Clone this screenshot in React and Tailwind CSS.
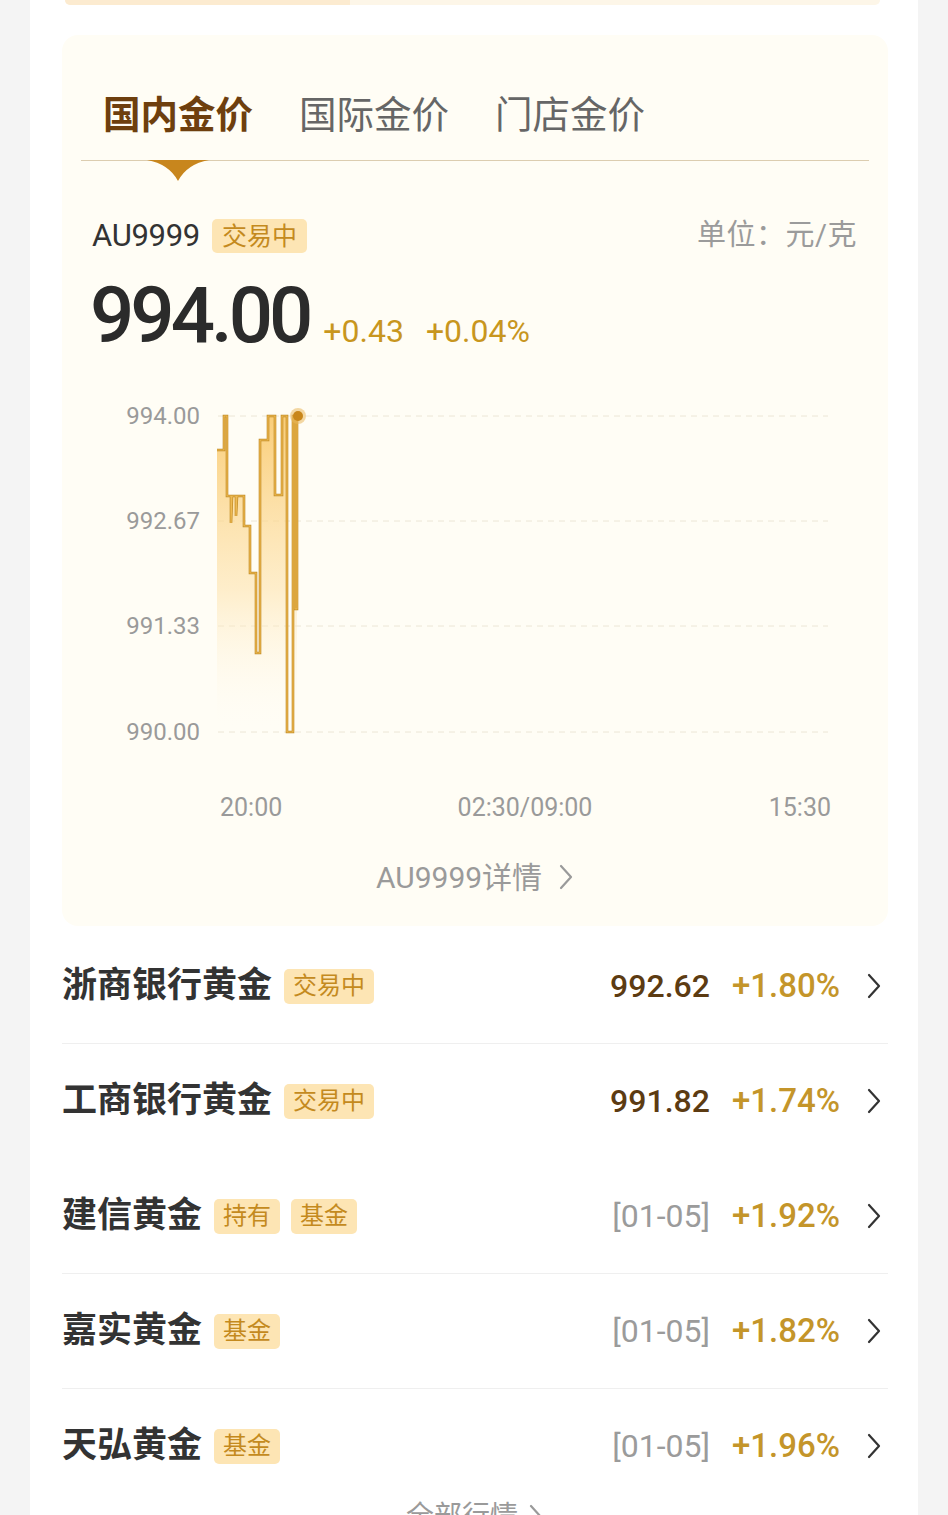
import clsx from 'clsx';

const rows = [
  { name: "浙商银行黄金", tags: ["交易中"], price: "992.62", pct: "+1.80%", line: true },
  { name: "工商银行黄金", tags: ["交易中"], price: "991.82", pct: "+1.74%", line: false },
  { name: "建信黄金", tags: ["持有", "基金"], date: "[01-05]", pct: "+1.92%", line: true },
  { name: "嘉实黄金", tags: ["基金"], date: "[01-05]", pct: "+1.82%", line: true },
  { name: "天弘黄金", tags: ["基金"], date: "[01-05]", pct: "+1.96%", line: false },
];

function Tag({ children, big }) {
  return (
    <span
      className={clsx(
        "inline-flex items-center justify-center rounded-[5px] bg-[#fde5b4] text-[#c48a1e] leading-none",
        big ? "h-[34px] px-[10px] text-[25px]" : "h-[35px] px-[9px] text-[24px]"
      )}
    >
      {children}
    </span>
  );
}

function Chevron({ className }) {
  return (
    <svg width="16" height="26" viewBox="0 0 16 26" className={className} fill="none">
      <path d="M3 2 L13 13 L3 24" stroke="currentColor" strokeWidth="2.2" strokeLinecap="round" strokeLinejoin="round" />
    </svg>
  );
}

// chart coordinates are page px minus the svg origin (62, 390)
const pts = [
  [217, 449], [224, 449], [224, 415], [227, 415], [227, 495], [231, 495], [231, 522], [232, 495],
  [236, 495], [236, 515], [237, 495], [244, 495], [244, 525], [250, 525], [250, 572], [256, 572],
  [256, 652], [260, 652], [260, 439], [268, 439], [268, 415], [275, 415], [275, 494], [282, 494],
  [282, 415], [287, 415], [287, 731], [293, 731], [293, 415], [295, 415], [295, 608], [297, 608], [297, 415],
].map(([x, y]) => [x - 62, y - 390]);

const linePath = pts.map(([x, y], i) => `${i ? "L" : "M"}${x} ${y}`).join(" ");
const areaPath = `${linePath} L${297 - 62} ${731 - 390} L${217 - 62} ${731 - 390} Z`;

function Chart() {
  const grid = [
    { y: 25, label: "994.00" },
    { y: 130, label: "992.67" },
    { y: 235, label: "991.33" },
    { y: 341, label: "990.00" },
  ];
  return (
    <svg width="826" height="440" viewBox="0 0 826 440" className="block">
      <defs>
        <linearGradient id="fillg" x1="0" y1="0" x2="0" y2="1">
          <stop offset="0%" stopColor="#f9c562" stopOpacity="0.85" />
          <stop offset="55%" stopColor="#fde1a8" stopOpacity="0.55" />
          <stop offset="100%" stopColor="#fffdf5" stopOpacity="0" />
        </linearGradient>
      </defs>
      {grid.map((g) => (
        <g key={g.label}>
          <line x1="156" x2="766" y1={g.y} y2={g.y} stroke="#ece6d6" strokeWidth="1" strokeDasharray="6 5" />
          <text x="138" y={g.y + 8} textAnchor="end" fontSize="24" fill="#9a9a9a" fontFamily="Roboto, sans-serif">
            {g.label}
          </text>
        </g>
      ))}
      <path d={areaPath} fill="url(#fillg)" />
      <path d={linePath} fill="none" stroke="#c08a24" strokeWidth="2.6" strokeLinejoin="miter" />
      <path d={linePath} fill="none" stroke="#eeba52" strokeWidth="1.2" strokeLinejoin="miter" />
      <circle cx={298 - 62} cy={415 - 390} r="8" fill="#e9b85c" opacity="0.55" />
      <circle cx={298 - 62} cy={415 - 390} r="5" fill="#c8861a" />
      <text x="158" y="425" fontSize="25" fill="#9a9a9a" fontFamily="Roboto, sans-serif">20:00</text>
      <text x="463" y="425" textAnchor="middle" fontSize="25" fill="#9a9a9a" fontFamily="Roboto, sans-serif">02:30/09:00</text>
      <text x="769" y="425" textAnchor="end" fontSize="25" fill="#9a9a9a" fontFamily="Roboto, sans-serif">15:30</text>
    </svg>
  );
}

export default function App() {
  return (
    <div className="min-h-[1515px] bg-[#f4f4f4] flex justify-center font-['Roboto','Noto_Sans_CJK_SC',sans-serif]">
      <div className="w-[888px] h-[1515px] bg-white overflow-hidden">
        {/* bottom edge of the card above */}
        <div className="ml-[35px] mr-[38px] h-[5px] rounded-b-[8px] bg-[#fdf6e8] flex">
          <div className="w-[285px] h-full rounded-bl-[8px] bg-[#fcebd0]" />
        </div>

        {/* quote panel */}
        <div className="mt-[30px] ml-[32px] mr-[30px] rounded-[16px] bg-[#fffdf5] pt-[55px] pb-[29px]">
          <div className="mx-[19px] border-b border-[#dccdb0] pb-[20px] pl-[22px] flex gap-[46px] text-[37.5px] leading-[50px]">
            <div className="relative font-bold text-[#6e3f0e]">
              国内金价
              <svg width="62" height="21" viewBox="0 0 62 21" className="absolute left-1/2 -translate-x-1/2 top-[70px]">
                <path d="M0 0 H62 Q40 4 31 21 Q22 4 0 0 Z" fill="#c8861d" />
              </svg>
            </div>
            <div className="text-[#666]">国际金价</div>
            <div className="text-[#666]">门店金价</div>
          </div>

          <div className="mt-[55px] h-[40px] pl-[30px] pr-[31px] flex items-center">
            <span className="text-[31px] text-[#333] tracking-[-0.3px]">AU9999</span>
            <span className="ml-[12px]">
              <Tag big>交易中</Tag>
            </span>
            <span className="ml-auto text-[29px] text-[#9b9b9b] tracking-[0.5px]">单位：元/克</span>
          </div>

          <div className="mt-[20px] h-[80px] pl-[28px] flex items-baseline">
            <span className="text-[78px] leading-[80px] font-medium text-[#2b2b2b] tracking-[-4px]">994.00</span>
            <span className="ml-[14px] text-[32px] text-[#c8961e]">+0.43</span>
            <span className="ml-[22px] text-[32px] text-[#c8961e]">+0.04%</span>
          </div>

          <div className="mt-[35px]">
            <Chart />
          </div>

          <div className="mt-[26px] h-[40px] flex items-center justify-center gap-[16px] text-[30px] text-[#9a9a9a]">
            <span>AU9999详情</span>
            <Chevron className="text-[#9a9a9a]" />
          </div>
        </div>

        {/* list */}
        <div className="ml-[32px] mr-[30px] mt-[3px]">
          {rows.map((r) => (
            <div
              key={r.name}
              className={clsx("h-[115px] flex items-center", r.line ? "border-b border-[#efefef]" : "border-b border-transparent")}
            >
              <span className="text-[35px] font-bold text-[#333]">{r.name}</span>
              <div className="ml-[12px] flex gap-[11px]">
                {r.tags.map((t) => (
                  <Tag key={t}>{t}</Tag>
                ))}
              </div>
              <div className="ml-auto flex items-center">
                {r.price ? (
                  <span className="text-[32px] font-medium text-[#5c3b12]">{r.price}</span>
                ) : (
                  <span className="text-[32px] text-[#9b9b9b]">{r.date}</span>
                )}
                <span className="ml-[22px] text-[33px] font-medium text-[#c4952a]">{r.pct}</span>
                <Chevron className="ml-[26px] mr-[6px] text-[#333]" />
              </div>
            </div>
          ))}
          <div className="-mt-[8px] flex items-center justify-center gap-[10px] text-[28px] text-[#9a9a9a]">
            <span>全部行情</span>
            <Chevron className="text-[#9a9a9a]" />
          </div>
        </div>
      </div>
    </div>
  );
}
